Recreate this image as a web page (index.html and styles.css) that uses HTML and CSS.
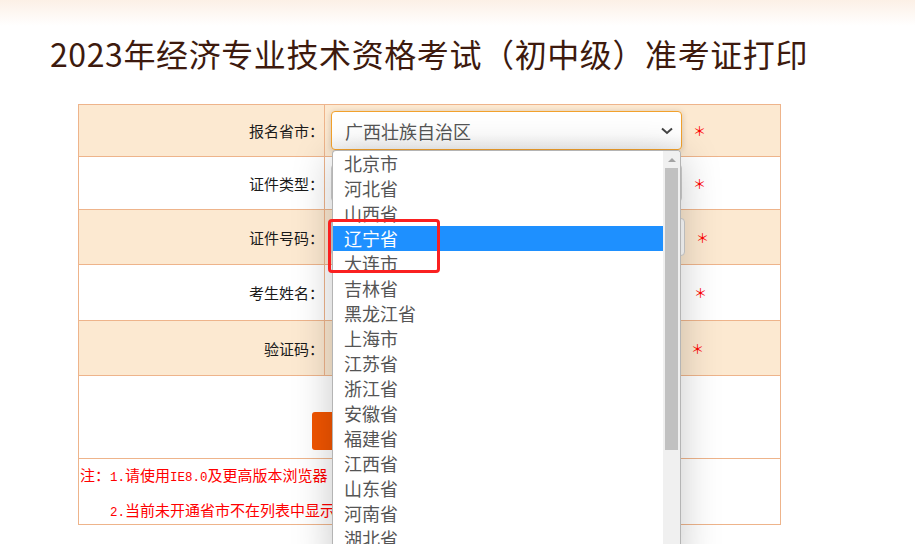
FILE: index.html
```html
<!DOCTYPE html>
<html lang="zh-CN">
<head>
<meta charset="utf-8">
<title>准考证打印</title>
<link rel="stylesheet" href="styles.css">
</head>
<body>
<div class="page">
  <header class="top">
    <h1 class="title">2023年经济专业技术资格考试（初中级）准考证打印</h1>
  </header>

  <div class="form-wrap">
    <div class="form">
      <div class="row row-1 alt">
        <div class="label">报名省市：</div>
        <div class="cell">
          <div class="select is-open">
            <span class="select-text">广西壮族自治区</span>
            <svg class="chevron" width="12" height="8" viewBox="0 0 12 8"><path d="M1 1.5 L6 6 L11 1.5" fill="none" stroke="#444" stroke-width="2"/></svg>
          </div>
          <span class="req">＊</span>
        </div>
      </div>
      <div class="row row-2">
        <div class="label">证件类型：</div>
        <div class="cell">
          <div class="control w-351"></div>
          <span class="req">＊</span>
        </div>
      </div>
      <div class="row row-3 alt">
        <div class="label">证件号码：</div>
        <div class="cell">
          <div class="control w-354"></div>
          <span class="req">＊</span>
        </div>
      </div>
      <div class="row row-4">
        <div class="label">考生姓名：</div>
        <div class="cell">
          <div class="control plain w-352"></div>
          <span class="req">＊</span>
        </div>
      </div>
      <div class="row row-5 alt">
        <div class="label">验证码：</div>
        <div class="cell">
          <div class="control plain w-349"></div>
          <span class="req">＊</span>
        </div>
      </div>
      <div class="row row-6">
        <div class="actions">
          <button class="btn" type="button" aria-label="查询准考证"></button>
        </div>
      </div>
      <div class="row row-7">
        <div class="notes">
          <p>注：<span class="ascii">1.</span>请使用<span class="ascii">IE8.0</span>及更高版本浏览器</p>
          <p class="indent"><span class="ascii">2.</span>当前未开通省市不在列表中显示</p>
        </div>
      </div>
    </div>

    <!-- open province list of the first select -->
    <div class="dropdown">
      <ul class="options">
        <li>北京市</li>
        <li>河北省</li>
        <li>山西省</li>
        <li class="active">辽宁省</li>
        <li>大连市</li>
        <li>吉林省</li>
        <li>黑龙江省</li>
        <li>上海市</li>
        <li>江苏省</li>
        <li>浙江省</li>
        <li>安徽省</li>
        <li>福建省</li>
        <li>江西省</li>
        <li>山东省</li>
        <li>河南省</li>
        <li>湖北省</li>
      </ul>
      <div class="scrollbar">
        <span class="arrow-up"></span>
        <span class="thumb"></span>
      </div>
    </div>

    <!-- highlight frame around two entries -->
    <div class="mark"></div>
  </div>
</div>
</body>
</html>
```

FILE: styles.css
```css
html, body {
  margin: 0;
  padding: 0;
  background: #fff;
}

body {
  font-family: "Noto Sans CJK SC", "Noto Sans", sans-serif;
  width: 915px;
  height: 544px;
  overflow: hidden;
}

.page {
  position: relative;
}

.top {
  padding: 30px 0 0 50px;
  background: linear-gradient(#fcf0e6 0, #fff 26px);
}

.title {
  margin: 0;
  font-size: 32px;
  line-height: 46px;
  font-weight: normal;
  color: #3d1a0e;
  letter-spacing: 0.6px;
}

.form-wrap {
  position: relative;
  margin: 28px 0 0 78px;
  width: 703px;
}

.form {
  width: 703px;
  box-sizing: border-box;
  border: 1px solid #eeb48b;
}

.row {
  display: flex;
  border-top: 1px solid #eeb48b;
}
.row-1 { border-top: 0; height: 51px; }
.row-2 { height: 52px; }
.row-3 { height: 54px; }
.row-4 { height: 55px; }
.row-5 { height: 54px; }
.row-6 { height: 82px; }
.row-7 { height: 65px; }

.alt {
  background: #fce9d1;
}

.label {
  width: 245px;
  flex: none;
  border-right: 1px solid #eeb48b;
  display: flex;
  align-items: center;
  justify-content: flex-end;
  font-size: 15px;
  color: #1a1a1a;
}

.cell {
  flex: 1;
  display: flex;
  align-items: center;
  padding-left: 6px;
}

.select {
  width: 351px;
  height: 39px;
  box-sizing: border-box;
  border: 1px solid #f2a12c;
  border-radius: 4px;
  background: linear-gradient(#fff 60%, #f4f4f4);
  box-shadow: 0 1px 6px rgba(0, 0, 0, 0.18);
  display: flex;
  align-items: center;
  justify-content: space-between;
  padding: 0 8px 0 13px;
  font-size: 18px;
  color: #555;
}

.chevron {
  display: block;
}

.control {
  height: 38px;
  box-sizing: border-box;
  border: 1px solid #cfcfcf;
  border-radius: 4px;
  background: #fff;
}
.control.plain {
  border-color: transparent;
  background: transparent;
}
.w-351 { width: 351px; }
.w-354 { width: 354px; }
.w-352 { width: 352px; }
.w-349 { width: 349px; }

.req {
  margin-left: 11px;
  font-size: 13px;
  line-height: 1;
  color: #f00;
}

.actions {
  flex: 1;
  display: flex;
  align-items: flex-start;
  padding-left: 233px;
}

.btn {
  width: 110px;
  height: 38px;
  margin-top: 36px;
  border: 0;
  border-radius: 3px;
  background: #f25500;
}

.notes {
  flex: 1;
  font-size: 15px;
  line-height: 32px;
  color: #f00;
  padding-left: 1px;
}
.notes p {
  margin: 0;
  white-space: nowrap;
}
.notes .indent {
  padding-left: 30px;
}
.notes .ascii {
  font-family: "Liberation Mono", monospace;
  font-size: 12.5px;
}

/* open list */
.dropdown {
  position: absolute;
  left: 254px;
  top: 46px;
  width: 349px;
  height: 420px;
  box-sizing: border-box;
  border: 1px solid #b4b4b4;
  border-bottom: 0;
  border-radius: 4px 4px 0 0;
  background: #fff;
  box-shadow: 0 6px 40px rgba(0, 0, 0, 0.22);
  display: flex;
  overflow: hidden;
}

.options {
  list-style: none;
  margin: 0;
  padding: 0;
  flex: 1;
  font-size: 18px;
  color: #555;
}
.options li {
  height: 25px;
  line-height: 25px;
  padding-left: 11px;
  white-space: nowrap;
}
.options li.active {
  background: #1e90ff;
  color: #fff;
}

.scrollbar {
  width: 17px;
  flex: none;
  background: #f0f0f0;
  display: flex;
  flex-direction: column;
  align-items: center;
}
.arrow-up {
  margin-top: 7px;
  width: 0;
  height: 0;
  border-left: 4px solid transparent;
  border-right: 4px solid transparent;
  border-bottom: 4px solid #a3a3a3;
}
.thumb {
  margin-top: 6px;
  width: 13px;
  height: 282px;
  background: #c1c1c1;
}

.mark {
  position: absolute;
  left: 250px;
  top: 115px;
  width: 112px;
  height: 54px;
  box-sizing: border-box;
  border: 3px solid #fa2020;
  border-radius: 4px;
}
```
